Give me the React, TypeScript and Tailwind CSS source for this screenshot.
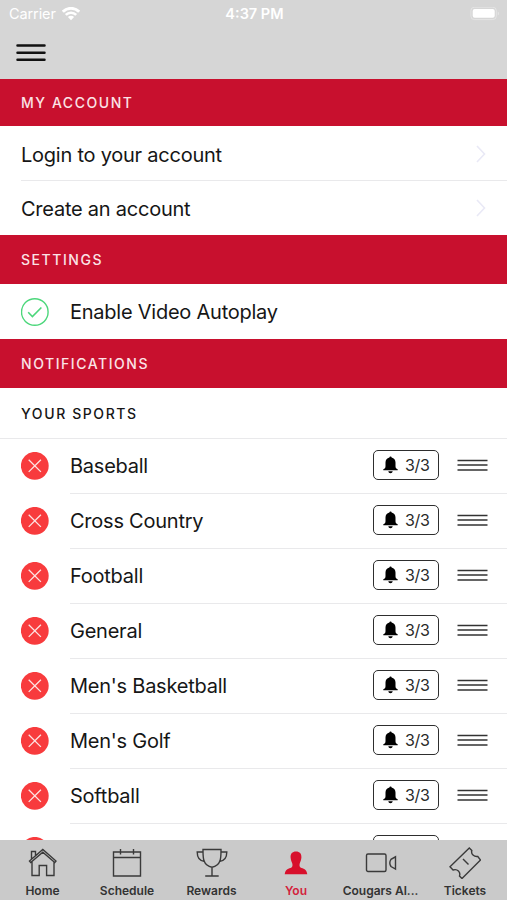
import React, { useState } from "react";
import clsx from "clsx";

const sports = [
  "Baseball",
  "Cross Country",
  "Football",
  "General",
  "Men's Basketball",
  "Men's Golf",
  "Softball",
];

function StatusBar() {
  return (
    <div className="grid grid-cols-3 items-center h-7 pl-[9px] pr-[7px] text-white text-[14.5px]">
      <div className="flex items-center gap-[6px]">
        <span className="tracking-[-0.1px]">Carrier</span>
        <svg width="18" height="14" viewBox="0 0 18 14" fill="none">
          <path d="M.8 4.800a11.500 11.500 0 0 1 16.400 0" stroke="white" strokeWidth="3" />
          <path d="M3.800 7.900a7.300 7.300 0 0 1 10.400 0" stroke="white" strokeWidth="2.600" />
          <path d="M9 13.200 5.900 10.100a4.400 4.400 0 0 1 6.200 0Z" fill="white" />
        </svg>
      </div>
      <span className="text-center font-semibold">4:37 PM</span>
      <div className="flex justify-end">
        <svg width="30" height="15" viewBox="0 0 30 15" fill="none">
          <rect x="0.9" y="0.200" width="25.400" height="12.400" rx="3.500" stroke="white" strokeOpacity="0.35" />
          <rect x="2.700" y="2" width="22" height="8.800" rx="2" fill="white" />
          <path d="M27.800 4.400c1.400.6 1.400 3.400 0 4Z" fill="white" fillOpacity="0.4" />
        </svg>
      </div>
    </div>
  );
}

function SectionHeader({ title, height }: { title: string; height: string }) {
  return (
    <h2
      className={clsx(
        "flex items-center bg-[#c8102e] pl-[21px] text-[14px] font-medium tracking-[1.55px] text-[#fbe3e6]",
        height
      )}
    >
      {title}
    </h2>
  );
}

function LinkRow({ label, last }: { label: string; last?: boolean }) {
  return (
    <button className="block w-full pl-[21px] text-left">
      <div
        className={clsx(
          "flex items-center justify-between pr-[20px]",
          last ? "h-[54px]" : "h-[55px] border-b border-[#e9e9eb] pt-[2px]"
        )}
      >
        <span className="pt-px text-[20px] tracking-[-0.24px]">{label}</span>
        <svg width="12" height="20" viewBox="0 0 12 20" fill="none">
          <path d="m2 2 7.500 8L2 18" stroke="#e9e9f6" strokeWidth="1.600" />
        </svg>
      </div>
    </button>
  );
}

// name is left out for the row that only peeks out above the tab bar
function SportRow({ name }: { name?: string }) {
  return (
    <div className="flex h-[55px] pl-[21px]">
      <svg className="mt-[13px] w-7 h-7 shrink-0" viewBox="0 0 28 28" fill="none">
        <circle cx="13.800" cy="13.800" r="13.900" fill="#f83b3d" />
        <path d="m7.700 7.700 12.200 12.200M19.900 7.700 7.700 19.900" stroke="#fde3e3" strokeWidth="1.300" />
      </svg>
      <div className="ml-[21px] flex grow items-center border-b border-[#e9e9eb] pr-[19px]">
        <span className="grow text-[20px] tracking-[-0.24px]">{name}</span>
        <button className="-mt-[2px] flex h-[30px] w-[66px] items-center gap-[7px] rounded-[5px] border-[1.5px] border-[#2e2e2e] pl-[9px]">
          <svg className="-mt-px" width="15" height="18" viewBox="0 0 15 18" fill="black">
            <path d="M7.500.6c.7 0 1 .4 1.100.9 2.500.5 3.900 2.400 3.900 5v3.400c0 1.700.5 2.600 2.200 3.400v1H.3v-1c1.700-.8 2.200-1.700 2.200-3.400V6.500c0-2.600 1.400-4.500 3.900-5C6.500 1 6.800.6 7.500.6Z" />
            <path d="M5.300 15.200h4.400c-.2 1.200-1 2-2.200 2s-2-.8-2.200-2Z" />
          </svg>
          {name && (
            <span className="text-[16px] tracking-[-0.3px] text-[#2a2a2a]">
              3/3
            </span>
          )}
        </button>
        <svg className="ml-[18px] -mt-[2px]" width="31" height="14" viewBox="0 0 31 14">
          <path d="M.5 2.500h30M.5 7h30M.5 12h30" stroke="#333" strokeWidth="1.400" />
        </svg>
      </div>
    </div>
  );
}

const tabs = [
  {
    label: "Home",
    icon: (
      <path d="M2.500 14 15.800 2.500 29 14l-1.200 1.500L15.800 5.200 3.700 15.500ZM4.500 12V4.500h4v4.300M5 14.500v14h7.200v-10h7.400v10h7.400v-14" />
    ),
  },
  {
    label: "Schedule",
    icon: <path d="M2.500 5h27v24h-27ZM2.500 10.500h27M9.500 2v5.500M22.500 2v5.500" />,
  },
  {
    label: "Rewards",
    icon: (
      <path d="M7 2.500h18c0 8 .4 16-9 17.800C6.600 18.500 7 10.500 7 2.500ZM7.200 5h-6c0 5 2 9 7.500 9.500M24.800 5h6c0 5-2 9-7.500 9.500M16 20.500V29M9.200 29h13.500" />
    ),
  },
  {
    label: "You",
    icon: (
      <path
        d="M16 4.500c3.700 0 5.700 2.300 5.400 6-.2 2.500-.9 4-1.600 5.800-.5 1.700-.4 3.600.7 4.300 2.600 1.400 6.200 1.200 6.800 6.700H4.700c.6-5.500 4.200-5.300 6.800-6.700 1.100-.7 1.200-2.600.7-4.300-.7-1.800-1.400-3.300-1.600-5.800-.3-3.700 1.700-6 5.400-6Z"
        fill="#d8102c"
        stroke="none"
      />
    ),
  },
  {
    label: "Cougars Al...",
    icon: (
      <>
        <rect x="1.500" y="7" width="19.500" height="17.500" rx="1.500" />
        <path d="M30.500 9.800v12.200l-4.500-2.500q-2.400-3.600 0-7.200Z" />
      </>
    ),
  },
  {
    label: "Tickets",
    icon: (
      <>
        <path d="M20.300 1 22.800 3.500C21.800 7.300 25 10 28.800 9.500L31.500 13 13 31.500 10.500 29C11.800 25 8.500 21.500 4 23L1 19.700Z" />
        <path d="m14 12 5.500 5.500" />
      </>
    ),
  },
];

export default function App() {
  const [activeTab, setActiveTab] = useState("You");

  return (
    <div className="flex flex-col w-full h-[900px] overflow-hidden bg-white text-[#161616] font-['Inter','Liberation_Sans',sans-serif]">
      <header className="h-[79px] shrink-0 bg-[#d6d6d6]">
        <StatusBar />
        <button className="block pt-[15px] pl-[15px]">
          <svg width="31" height="20" viewBox="0 0 31 20">
            <path d="M2.500 2.600h27M2.500 9.700h27M2.500 16.800h27" stroke="#111" strokeWidth="2.500" strokeLinecap="round" />
          </svg>
        </button>
      </header>

      <main className="grow overflow-hidden">
        <SectionHeader title="MY ACCOUNT" height="h-[47px]" />
        <LinkRow label="Login to your account" />
        <LinkRow label="Create an account" last />

        <SectionHeader title="SETTINGS" height="h-[49px]" />
        <div className="flex h-[55px] items-center pl-[21px]">
          <svg className="w-7 h-7" viewBox="0 0 28 28" fill="none" stroke="#4cd77b">
            <circle cx="13.800" cy="14" r="13.300" strokeWidth="1.400" />
            <path d="m7.200 14.300 4.200 4.200 9-9" strokeWidth="1.600" />
          </svg>
          <span className="ml-[21px] text-[20px] tracking-[-0.24px]">
            Enable Video Autoplay
          </span>
        </div>

        <SectionHeader title="NOTIFICATIONS" height="h-[49px]" />
        <h3 className="flex h-[51px] items-center border-b border-[#e9e9eb] pt-px pl-[21px] text-[14px] font-medium tracking-[1.6px]">
          YOUR SPORTS
        </h3>
        {sports.map((s) => (
          <SportRow key={s} name={s} />
        ))}
        <SportRow />
      </main>

      <nav className="grid h-[60px] shrink-0 grid-cols-6 bg-[#cacaca]">
        {tabs.map((tab) => (
          <button
            key={tab.label}
            onClick={() => setActiveTab(tab.label)}
            className={clsx(
              "flex flex-col items-center pt-[7px] pl-[0.5px] text-[12px] font-semibold whitespace-nowrap",
              activeTab === tab.label ? "text-[#d3213c]" : "text-[#333]"
            )}
          >
            <svg width="32" height="32" viewBox="0 0 32 32" fill="none" stroke="#3a3a3a" strokeWidth="1.400">
              {tab.icon}
            </svg>
            <span className="mt-[3px]">{tab.label}</span>
          </button>
        ))}
      </nav>
    </div>
  );
}
